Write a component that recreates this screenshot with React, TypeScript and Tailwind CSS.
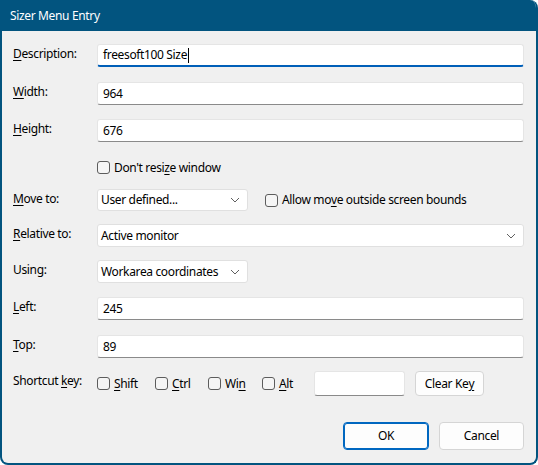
import React from 'react';

const font = { fontFamily: '"Segoe UI", "Noto Sans", "Open Sans", sans-serif' };

const U = ({ children }: { children: React.ReactNode }) => <span className="underline underline-offset-2">{children}</span>;

const Label = ({ children }: { children: React.ReactNode }) => (
    <div className="w-[84px] shrink-0 self-start pt-[2px] leading-[16px]">{children}</div>
);

const TextBox = ({ value, focused, className = '' }: { value?: string; focused?: boolean; className?: string }) => (
    <div
        className={`flex h-full items-center rounded-[3px] border border-[#e5e5e5] bg-white px-[5px] ${
            focused ? 'border-b-2 border-b-[#005fb8]' : 'border-b-[#8a8a8a]'
        } ${className}`}
    >
        <span>{value}</span>
        {focused && <span className="ml-[1px] inline-block h-[15px] w-[1px] bg-black" />}
    </div>
);

const Chevron = () => (
    <svg width="10" height="6" viewBox="0 0 10 6" className="shrink-0">
        <path d="M1 1 L5 5 L9 1" fill="none" stroke="#606060" strokeWidth="1" />
    </svg>
);

const Select = ({ value, className = '' }: { value: string; className?: string }) => (
    <div className={`flex h-full items-center justify-between rounded-[3px] border border-[#e0e0e0] bg-white pl-[3px] pr-[7px] ${className}`}>
        <span>{value}</span>
        <Chevron />
    </div>
);

const Check = ({ children, className = '' }: { children: React.ReactNode; className?: string }) => (
    <div className={`flex items-center gap-[4px] ${className}`}>
        <span className="inline-block h-[13px] w-[13px] shrink-0 rounded-[3px] border border-[#5c5c5c] bg-[#f5f5f5]" />
        <span className="leading-[16px]">{children}</span>
    </div>
);

const Button = ({ children, primary, className = '' }: { children: React.ReactNode; primary?: boolean; className?: string }) => (
    <div
        className={`flex items-center justify-center rounded-[4px] border bg-[#fdfdfd] ${
            primary ? 'border-[#0067c0] shadow-[inset_0_0_0_1px_#0067c0]' : 'border-[#d5d5d5]'
        } ${className}`}
    >
        {children}
    </div>
);

export default function App() {
    return (
        <div className="h-[465px] w-[538px] bg-white text-[12px] tracking-[-0.35px] text-black" style={font}>
            <div className="flex h-full w-full flex-col overflow-hidden rounded-tr-[8px] rounded-b-[8px] border-x-2 border-b-2 border-[#02547f] bg-[#f0f0f0]">
                <div className="flex h-[31px] shrink-0 items-center bg-[#02547f] pl-[8px] text-white">Sizer Menu Entry</div>

                <div className="flex flex-col pl-[11px] pr-[12px]">
                    <div className="mt-[13px] flex h-[23px]">
                        <Label><U>D</U>escription:</Label>
                        <TextBox value="freesoft100 Size" focused className="flex-1" />
                    </div>
                    <div className="mt-[15px] flex h-[23px]">
                        <Label><U>W</U>idth:</Label>
                        <TextBox value="964" className="flex-1" />
                    </div>
                    <div className="mt-[14px] flex h-[23px]">
                        <Label><U>H</U>eight:</Label>
                        <TextBox value="676" className="flex-1" />
                    </div>
                    <div className="mt-[16px] flex h-[19px] pl-[84px]">
                        <Check>Don't resi<U>z</U>e window</Check>
                    </div>
                    <div className="mt-[12px] flex h-[22px] items-center">
                        <Label><U>M</U>ove to:</Label>
                        <Select value="User defined..." className="w-[151px]" />
                        <Check className="ml-[17px]">Allow mo<U>v</U>e outside screen bounds</Check>
                    </div>
                    <div className="mt-[13px] flex h-[23px]">
                        <Label><U>R</U>elative to:</Label>
                        <Select value="Active monitor" className="flex-1" />
                    </div>
                    <div className="mt-[13px] flex h-[23px]">
                        <Label>Using:</Label>
                        <Select value="Workarea coordinates" className="w-[151px]" />
                    </div>
                    <div className="mt-[14px] flex h-[23px]">
                        <Label><U>L</U>eft:</Label>
                        <TextBox value="245" className="flex-1" />
                    </div>
                    <div className="mt-[15px] flex h-[23px]">
                        <Label><U>T</U>op:</Label>
                        <TextBox value="89" className="flex-1" />
                    </div>
                    <div className="mt-[13px] flex h-[25px] items-center">
                        <Label>Shortcut <U>k</U>ey:</Label>
                        <Check className="w-[58px]"><U>S</U>hift</Check>
                        <Check className="w-[53px]"><U>C</U>trl</Check>
                        <Check className="w-[54px]">Wi<U>n</U></Check>
                        <Check className="w-[52px]"><U>A</U>lt</Check>
                        <TextBox className="h-[23px] w-[91px]" />
                        <Button className="ml-[10px] h-[25px] w-[69px]">Clear Ke<U>y</U></Button>
                    </div>
                    <div className="mt-[26px] flex h-[28px] justify-end gap-[10px]">
                        <Button primary className="w-[86px]">OK</Button>
                        <Button className="w-[85px]">Cancel</Button>
                    </div>
                </div>
            </div>
        </div>
    );
}
